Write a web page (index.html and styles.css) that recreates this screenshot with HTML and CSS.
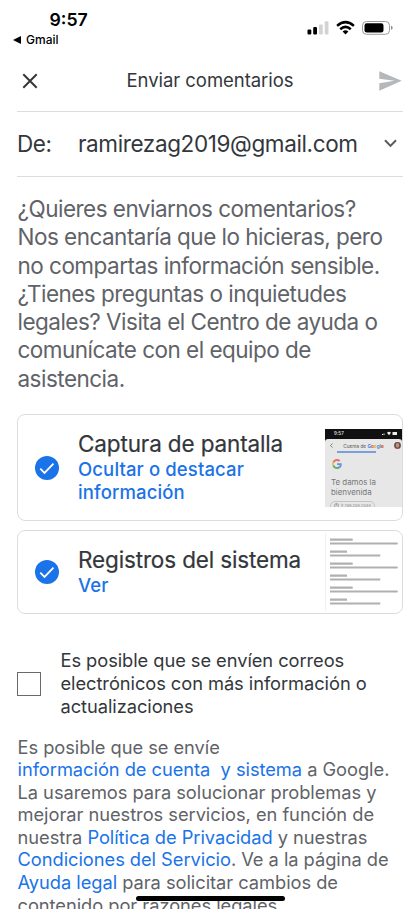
FILE: index.html
```html
<!DOCTYPE html>
<html lang="es">
<head>
<meta charset="utf-8">
<title>Enviar comentarios</title>
<link rel="stylesheet" href="styles.css">
</head>
<body>
<div class="screen">
  <header class="status">
    <div class="status-left">
      <div class="clock">9:57</div>
      <div class="back"><svg width="8" height="8" viewBox="0 0 8 8"><path d="M8 0v8L0 4z"/></svg><span>Gmail</span></div>
    </div>
    <svg class="status-icons" width="86" height="16" viewBox="0 0 86 16">
      <rect x="0.5" y="9.5" width="3.8" height="5" rx="1.1"/>
      <rect x="6.2" y="7" width="3.8" height="7.500" rx="1.100"/>
      <g fill="#d3d3d3"><rect x="12" y="4.500" width="3.800" height="10" rx="1.100"/><rect x="17.700" y="1.300" width="3.800" height="13.200" rx="1.100"/></g>
      <g fill="none" stroke="#000" stroke-width="2.500"><path d="M30.100 5.900Q38.500-1.700 46.900 5.900"/><path d="M33.200 9.200Q38.500 4.600 43.800 9.200"/></g>
      <path d="M35.600 11.400Q38.500 8.900 41.400 11.400L38.500 14.400z"/>
      <rect x="55.500" y="1.500" width="27" height="12.800" rx="4" fill="none" stroke="#9b9b9b"/>
      <rect x="57.500" y="3.300" width="19" height="9.200" rx="2.300"/>
      <path d="M84 5.800q1.700.600 1.700 2t-1.700 2z" fill="#888"/>
    </svg>
  </header>

  <nav class="titlebar">
    <svg class="close" width="16" height="16" viewBox="0 0 16 16"><path d="M1.300 1.300 14.700 14.700M14.700 1.300 1.300 14.700"/></svg>
    <h1>Enviar comentarios</h1>
    <svg class="send" width="23" height="20" viewBox="0 0 23 20"><path d="M.3.200 22.700 9.800.3 19.700V12.200L15.500 9.800.3 7.700z"/></svg>
  </nav>

  <div class="from">
    <span class="from-label">De:</span>
    <span class="from-mail">ramirezag2019@gmail.com</span>
    <svg class="chevron" width="13" height="9" viewBox="0 0 13 9"><path d="M1 1.300 6.500 6.900 12 1.300"/></svg>
  </div>

  <p class="intro">¿Quieres enviarnos comentarios?<br>Nos encantaría que lo hicieras, pero<br>no compartas información sensible.<br>¿Tienes preguntas o inquietudes<br>legales? Visita el Centro de ayuda o<br>comunícate con el equipo de<br>asistencia.</p>

  <section class="card card-shot">
    <svg class="check" width="24" height="24" viewBox="0 0 24 24"><circle cx="12" cy="12" r="12"/><path d="M5.300 12.700 9.500 16.900 18.500 7.600"/></svg>
    <div class="card-text">
      <h2>Captura de pantalla</h2>
      <a class="action">Ocultar o destacar<br>información</a>
    </div>
    <div class="shot">
      <div class="shot-status"><span>9:57</span>
        <svg width="16" height="5" viewBox="0 0 16 5"><path d="M0 3h1v1H0zM1.500 2.500h1V4h-1zM5 1.700Q7 0 9 1.700L7 4.200zM10.500 1h4.500v3h-4.500z"/></svg>
      </div>
      <div class="shot-page">
        <div class="shot-head">
          <svg width="3" height="5" viewBox="0 0 3 5"><path d="M2.500.5.5 2.500l2 2" fill="none" stroke="#555" stroke-width=".7"/></svg>
          <span class="shot-title">Cuenta de <b><i class="g-blue">G</i><i class="g-red">o</i><i class="g-yellow">o</i><i class="g-blue">g</i><i class="g-green">l</i><i class="g-red">e</i></b></span>
          <svg width="7" height="7" viewBox="0 0 7 7"><circle cx="3.500" cy="3.500" r="3.400" fill="#654b49"/><ellipse cx="3.500" cy="3.200" rx="1.700" ry="2.200" fill="#c7907c"/><path d="M1.300 6q2.200-1.700 4.400 0-2.200 1.700-4.400 0" fill="#a96060"/></svg>
        </div>
        <div class="shot-progress"></div>
        <svg class="shot-g" width="10" height="10" viewBox="0 0 48 48"><path fill="#e57368" d="M24 9.500c3.500 0 6.700 1.200 9.200 3.600l6.900-6.900C35.900 2.400 30.500 0 24 0 14.600 0 6.500 5.400 2.600 13.200l8 6.200C12.400 13.700 17.700 9.500 24 9.500z"/><path fill="#6394e5" d="M47 24.600c0-1.600-.2-3.100-.4-4.600H24v9h12.900c-.6 3-2.200 5.500-4.700 7.200l7.700 6C44.400 38 47 31.800 47 24.600z"/><path fill="#e9c452" d="M10.500 28.600c-.5-1.400-.8-3-.8-4.600s.3-3.100.8-4.600l-8-6.200C.9 16.500 0 20.100 0 24s.9 7.500 2.600 10.800z"/><path fill="#5dae78" d="M24 48c6.500 0 12-2.100 15.900-5.800l-7.700-6c-2.100 1.500-4.900 2.300-8.200 2.300-6.300 0-11.600-4.200-13.500-9.900l-8 6.200C6.500 42.600 14.600 48 24 48z"/></svg>
        <div class="shot-welcome">Te damos la<br>bienvenida</div>
        <div class="shot-chip"><svg width="5" height="5" viewBox="0 0 5 5"><circle cx="2.500" cy="2.500" r="2" fill="none" stroke="#888" stroke-width=".7"/><circle cx="2.500" cy="2" r=".7" fill="#888"/></svg><span>jr.789.206.2546</span></div>
      </div>
    </div>
  </section>

  <section class="card card-logs">
    <svg class="check" width="24" height="24" viewBox="0 0 24 24"><circle cx="12" cy="12" r="12"/><path d="M5.300 12.700 9.500 16.900 18.500 7.600"/></svg>
    <div class="card-text">
      <h2>Registros del sistema</h2>
      <a class="action">Ver</a>
    </div>
    <svg class="logs" width="77" height="78" viewBox="0 0 77 78">
      <path d="M.5 0v78" stroke="#f1f1f1"/>
      <g stroke="#b0b0b0" stroke-width="2.200"><path d="M5 6.700h22.700M5 10.500h67.700M5 18.700h17M5 22.500h50.300M5 30.700h22.700M5 34.500h67.700M5 42.700h17M5 46.500h50.300M5 54.700h22.700M5 58.500h67.700M5 66.700h17M5 70.500h50.300"/></g>
    </svg>
  </section>

  <label class="optin">
    <span class="box"></span>
    <span class="optin-text">Es posible que se envíen correos<br>electrónicos con más información o<br>actualizaciones</span>
  </label>

  <p class="legal">Es posible que se envíe<br><a>información de cuenta&nbsp; y sistema</a> a Google.<br>La usaremos para solucionar problemas y<br>mejorar nuestros servicios, en función de<br>nuestra <a>Política de Privacidad</a> y nuestras<br><a>Condiciones del Servicio</a>. Ve a la página de<br><a>Ayuda legal</a> para solicitar cambios de<br>contenido por razones legales.</p>
  <div class="home-bar"></div>
</div>
</body>
</html>
```
FILE: styles.css
```css
* { box-sizing: border-box; }
body { margin: 0; background: #fff; font-family: Inter, "Liberation Sans", sans-serif; color: #33373b; }
h1, h2, p { margin: 0; font-weight: 400; }
svg { display: block; flex: none; }
.screen { position: relative; width: 420px; height: 909px; overflow: hidden; padding: 0 17px; }

.status { height: 50px; display: flex; justify-content: space-between; margin: 0 -17px; padding: 0 27.5px 0 13px; color: #000; }
.clock { margin: 9px 0 0 36.5px; font-size: 17.7px; line-height: 22px; font-weight: 600; }
.back { display: flex; align-items: center; gap: 5px; margin-top: 1px; font-size: 12px; line-height: 16px; font-weight: 500; }
.status-icons { margin-top: 20px; }

.titlebar { height: 62px; width: 386px; border-bottom: 1px solid #dcdddf; display: flex; align-items: center; justify-content: space-between; padding: 0 1px 0 5px; }
.titlebar h1 { font-size: 18.5px; line-height: 24px; letter-spacing: -.05px; white-space: nowrap; padding: 0 0 2px 3px; }
.close { fill: none; stroke: #33373b; stroke-width: 2; }
.send { fill: #b5b8bb; }

.from { height: 65px; width: 386px; border-bottom: 1px solid #dcdddf; display: flex; align-items: center; font-size: 22.5px; letter-spacing: -.38px; white-space: nowrap; padding-bottom: 2px; }
.from-label { width: 61px; }
.chevron { margin-left: auto; margin-right: 6px; fill: none; stroke: #565b60; stroke-width: 2; }

.intro { margin-top: 18px; height: 198px; font-size: 22.5px; line-height: 28.27px; letter-spacing: -.52px; color: #5f6368; white-space: nowrap; padding-left: .5px; }

.card { width: 386px; border: 1px solid #dadce0; border-radius: 8px; display: flex; align-items: center; padding-left: 17px; }
.card-shot { height: 107px; margin-top: 21px; }
.card-logs { height: 84px; margin-top: 9px; }
.check { fill: #1a73e8; }
.check path { fill: none; stroke: #fff; stroke-width: 1.8; }
.card-text { margin-left: 19px; flex: 1; padding-bottom: 2px; white-space: nowrap; }
.card h2 { font-size: 22.5px; line-height: 28px; letter-spacing: -.14px; -webkit-text-stroke: .2px; }
.action { display: block; font-size: 18.5px; line-height: 23px; letter-spacing: .13px; font-weight: 500; color: #1a73e8; }
.shot { width: 77px; height: 78px; background: #111; overflow: hidden; flex: none; }
.shot-status { height: 10px; display: flex; justify-content: space-between; align-items: center; padding: 0 4px 0 9px; font-size: 4.5px; font-weight: 600; color: #ddd; }
.shot-status svg { fill: #eee; }
.shot-page { height: 68px; background: #e7e7e7; border-radius: 3px 3px 0 0; overflow: hidden; }
.shot-head { height: 12px; padding: 2px 1px 0 5px; display: flex; align-items: center; justify-content: space-between; }
.shot-title { font-size: 4.7px; color: #555; }
.shot-title i { font-style: normal; }
.g-blue { color: #4285f4; }
.g-red { color: #ea4335; }
.g-yellow { color: #e5ad00; }
.g-green { color: #34a853; }
.shot-progress { width: 39px; height: 2px; margin-left: 12px; background: #7ba0d8; }
.shot-g { margin: 6px 0 0 7px; }
.shot-welcome { margin: 8px 0 0 6px; font-size: 7.9px; line-height: 10px; color: #75777a; }
.shot-chip { width: 45px; height: 10px; margin: 4px 0 0 5px; padding: 1px 3px; border: 1px solid #c4c4c4; border-radius: 5px; display: flex; gap: 2px; font-size: 4px; line-height: 5px; color: #888; }

.optin { display: flex; align-items: center; height: 69px; margin-top: 35px; }
.box { width: 24px; height: 24px; border: 1px solid #66696d; }
.optin-text { margin-left: 19.5px; font-size: 18.3px; line-height: 23px; letter-spacing: -.06px; white-space: nowrap; }

.legal { margin-top: 17.5px; padding-left: .5px; font-size: 18.3px; line-height: 22.6px; letter-spacing: -.04px; color: #5f6368; white-space: nowrap; }
.legal a { color: #1a73e8; }
.home-bar { position: absolute; left: 135.5px; top: 895.5px; width: 149px; height: 5px; border-radius: 3px; background: #000; }
```
